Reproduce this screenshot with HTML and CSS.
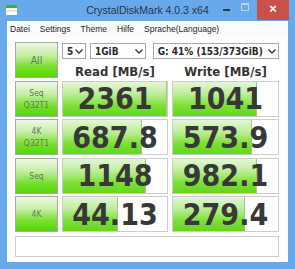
FILE: index.html
```html
<!DOCTYPE html>
<html lang="en">
<head>
    <meta charset="UTF-8">
    <meta name="viewport" content="width=device-width, initial-scale=1.0">
    <title>CrystalDiskMark 4.0.3 x64</title>
    <link rel="stylesheet" href="styles.css">
</head>
<body>

<div class="window">
    <!-- Title bar -->
    <div class="titlebar">
        <svg class="app-icon" width="11" height="10" viewBox="0 0 11 10">
            <rect x="0" y="0" width="11" height="3" fill="#3fae3a"/>
            <rect x="0" y="3" width="11" height="2" fill="#ffffff"/>
            <rect x="0" y="5" width="11" height="2" fill="#dfe6ee"/>
            <rect x="0" y="7" width="11" height="3" fill="#ffffff"/>
        </svg>
        <div class="title">CrystalDiskMark 4.0.3 x64</div>
        <div class="controls">
            <span class="ctl min"></span>
            <span class="ctl max"></span>
            <span class="ctl close">&times;</span>
        </div>
    </div>

    <!-- Menu -->
    <div class="menubar">
        <span>Datei</span>
        <span>Settings</span>
        <span>Theme</span>
        <span>Hilfe</span>
        <span>Sprache(Language)</span>
    </div>

    <div class="client">
        <div class="grid">
            <div class="label all">All</div>
            <div class="top">
                <div class="selects">
                    <div class="select s-count">5 <svg class="chev" width="8" height="5" viewBox="0 0 8 5"><path d="M0.5 0.5 L4 4 L7.5 0.5" fill="none" stroke="#333" stroke-width="1.3"/></svg></div>
                    <div class="select s-size">1GiB <svg class="chev" width="8" height="5" viewBox="0 0 8 5"><path d="M0.5 0.5 L4 4 L7.5 0.5" fill="none" stroke="#333" stroke-width="1.3"/></svg></div>
                    <div class="select s-drive">G: 41% (153/373GiB) <svg class="chev" width="8" height="5" viewBox="0 0 8 5"><path d="M0.5 0.5 L4 4 L7.5 0.5" fill="none" stroke="#333" stroke-width="1.3"/></svg></div>
                </div>
                <div class="heads">
                    <div class="head">Read [MB/s]</div>
                    <div class="head">Write [MB/s]</div>
                </div>
            </div>

            <div class="label">Seq<br>Q32T1</div>
            <div class="cell"><div class="bar" style="width: 100%"></div><span>2361</span></div>
            <div class="cell"><div class="bar" style="width: 80%"></div><span>1041</span></div>

            <div class="label">4K<br>Q32T1</div>
            <div class="cell"><div class="bar" style="width: 76%"></div><span>687.8</span></div>
            <div class="cell"><div class="bar" style="width: 75%"></div><span>573.9</span></div>

            <div class="label">Seq</div>
            <div class="cell"><div class="bar" style="width: 80%"></div><span>1148</span></div>
            <div class="cell"><div class="bar" style="width: 80%"></div><span>982.1</span></div>

            <div class="label">4K</div>
            <div class="cell"><div class="bar" style="width: 53%"></div><span>44.13</span></div>
            <div class="cell"><div class="bar" style="width: 69%"></div><span>279.4</span></div>
        </div>
        <div class="comment"></div>
    </div>
</div>

</body>
</html>
```

FILE: styles.css
```css
body {
    margin: 0;
    font-family: "Liberation Sans", Arial, sans-serif;
}
.window {
    width: 295px;
    height: 269px;
    box-sizing: border-box;
    background-color: #68a9ec;
    padding: 0 7px 7px 7px;
    display: flex;
    flex-direction: column;
}
/* Title bar */
.titlebar {
    height: 21px;
    margin: 0 -7px;
    position: relative;
    display: flex;
    align-items: center;
    justify-content: center;
}
.app-icon {
    position: absolute;
    left: 6px;
    top: 5px;
}
.title {
    font-size: 10.5px;
    color: #25364c;
    margin-top: -1px;
}
.controls {
    position: absolute;
    right: 6px;
    top: 0;
    display: flex;
    align-items: flex-start;
}
.ctl {
    display: block;
}
.min {
    width: 7px;
    height: 2px;
    background-color: #2d3a4a;
    margin: 9px 11px 0 0;
}
.max {
    width: 6px;
    height: 5px;
    border: 1px solid #b9d6f5;
    border-top-width: 2px;
    margin: 3px 8px 0 0;
}
.close {
    width: 32px;
    height: 20px;
    background-color: #c9514c;
    color: white;
    font-size: 13px;
    font-weight: bold;
    text-align: center;
    line-height: 17px;
}
/* Menu */
.menubar {
    height: 16px;
    background-color: #fafbfc;
    display: flex;
    align-items: center;
    padding-left: 3px;
    font-size: 8.5px;
    color: #1e1e1e;
}
.menubar span {
    margin-right: 10px;
}
/* Client area */
.client {
    flex: 1;
    background-color: white;
    padding: 5px 9px 0 8px;
}
.grid {
    display: grid;
    grid-template-columns: 43px 106px 107px;
    grid-auto-rows: 36px;
    column-gap: 4px;
    row-gap: 2.5px;
}
.label {
    box-sizing: border-box;
    border: 1px solid #a4aca2;
    background: linear-gradient(#eef9e8 0%, #c6efa6 35%, #78e02e 70%, #55d40a 100%);
    color: #5f7a55;
    font-family: "DejaVu Sans Condensed", "DejaVu Sans", sans-serif;
    font-stretch: condensed;
    font-size: 8.5px;
    line-height: 12px;
    text-align: center;
    display: flex;
    align-items: center;
    justify-content: center;
}
.label.all {
    font-size: 10.5px;
}
.top {
    grid-column: 2 / 4;
    display: flex;
    flex-direction: column;
}
.selects {
    display: flex;
    margin-top: 1px;
}
.select {
    box-sizing: border-box;
    height: 16px;
    border: 1px solid #a9a9a9;
    background-color: white;
    font-family: "DejaVu Sans Condensed", "DejaVu Sans", sans-serif;
    font-stretch: condensed;
    font-weight: bold;
    font-size: 10px;
    color: #2a2a2a;
    display: flex;
    align-items: center;
    justify-content: space-between;
    padding: 0 2px 0 4px;
}
.s-count {
    width: 24px;
}
.s-size {
    width: 56px;
    margin-left: 4px;
}
.s-drive {
    width: 127px;
    margin-left: 7px;
}
.heads {
    display: grid;
    grid-template-columns: 106px 107px;
    column-gap: 4px;
    margin-top: 5px;
}
.head {
    text-align: center;
    font-family: "DejaVu Sans Condensed", "DejaVu Sans", sans-serif;
    font-stretch: condensed;
    font-weight: bold;
    font-size: 13px;
    color: #333;
}
.cell {
    position: relative;
    box-sizing: border-box;
    border: 1px solid #cdcdcd;
    background-color: white;
    display: flex;
    align-items: center;
    justify-content: center;
    overflow: hidden;
}
.bar {
    position: absolute;
    left: 0;
    top: 0;
    bottom: 0;
    box-sizing: border-box;
    border-right: 1px solid #9ccf7e;
    background: linear-gradient(#e4f6d6 0%, #bdee98 35%, #7ce034 70%, #62d81a 100%);
}
.cell span {
    position: relative;
    font-family: "DejaVu Sans Condensed", "DejaVu Sans", sans-serif;
    font-stretch: condensed;
    font-weight: bold;
    font-size: 30px;
    color: #383838;
}
.comment {
    height: 21px;
    box-sizing: border-box;
    border: 1px solid #cdcdcd;
    margin-top: 4px;
    width: 264px;
}
```
